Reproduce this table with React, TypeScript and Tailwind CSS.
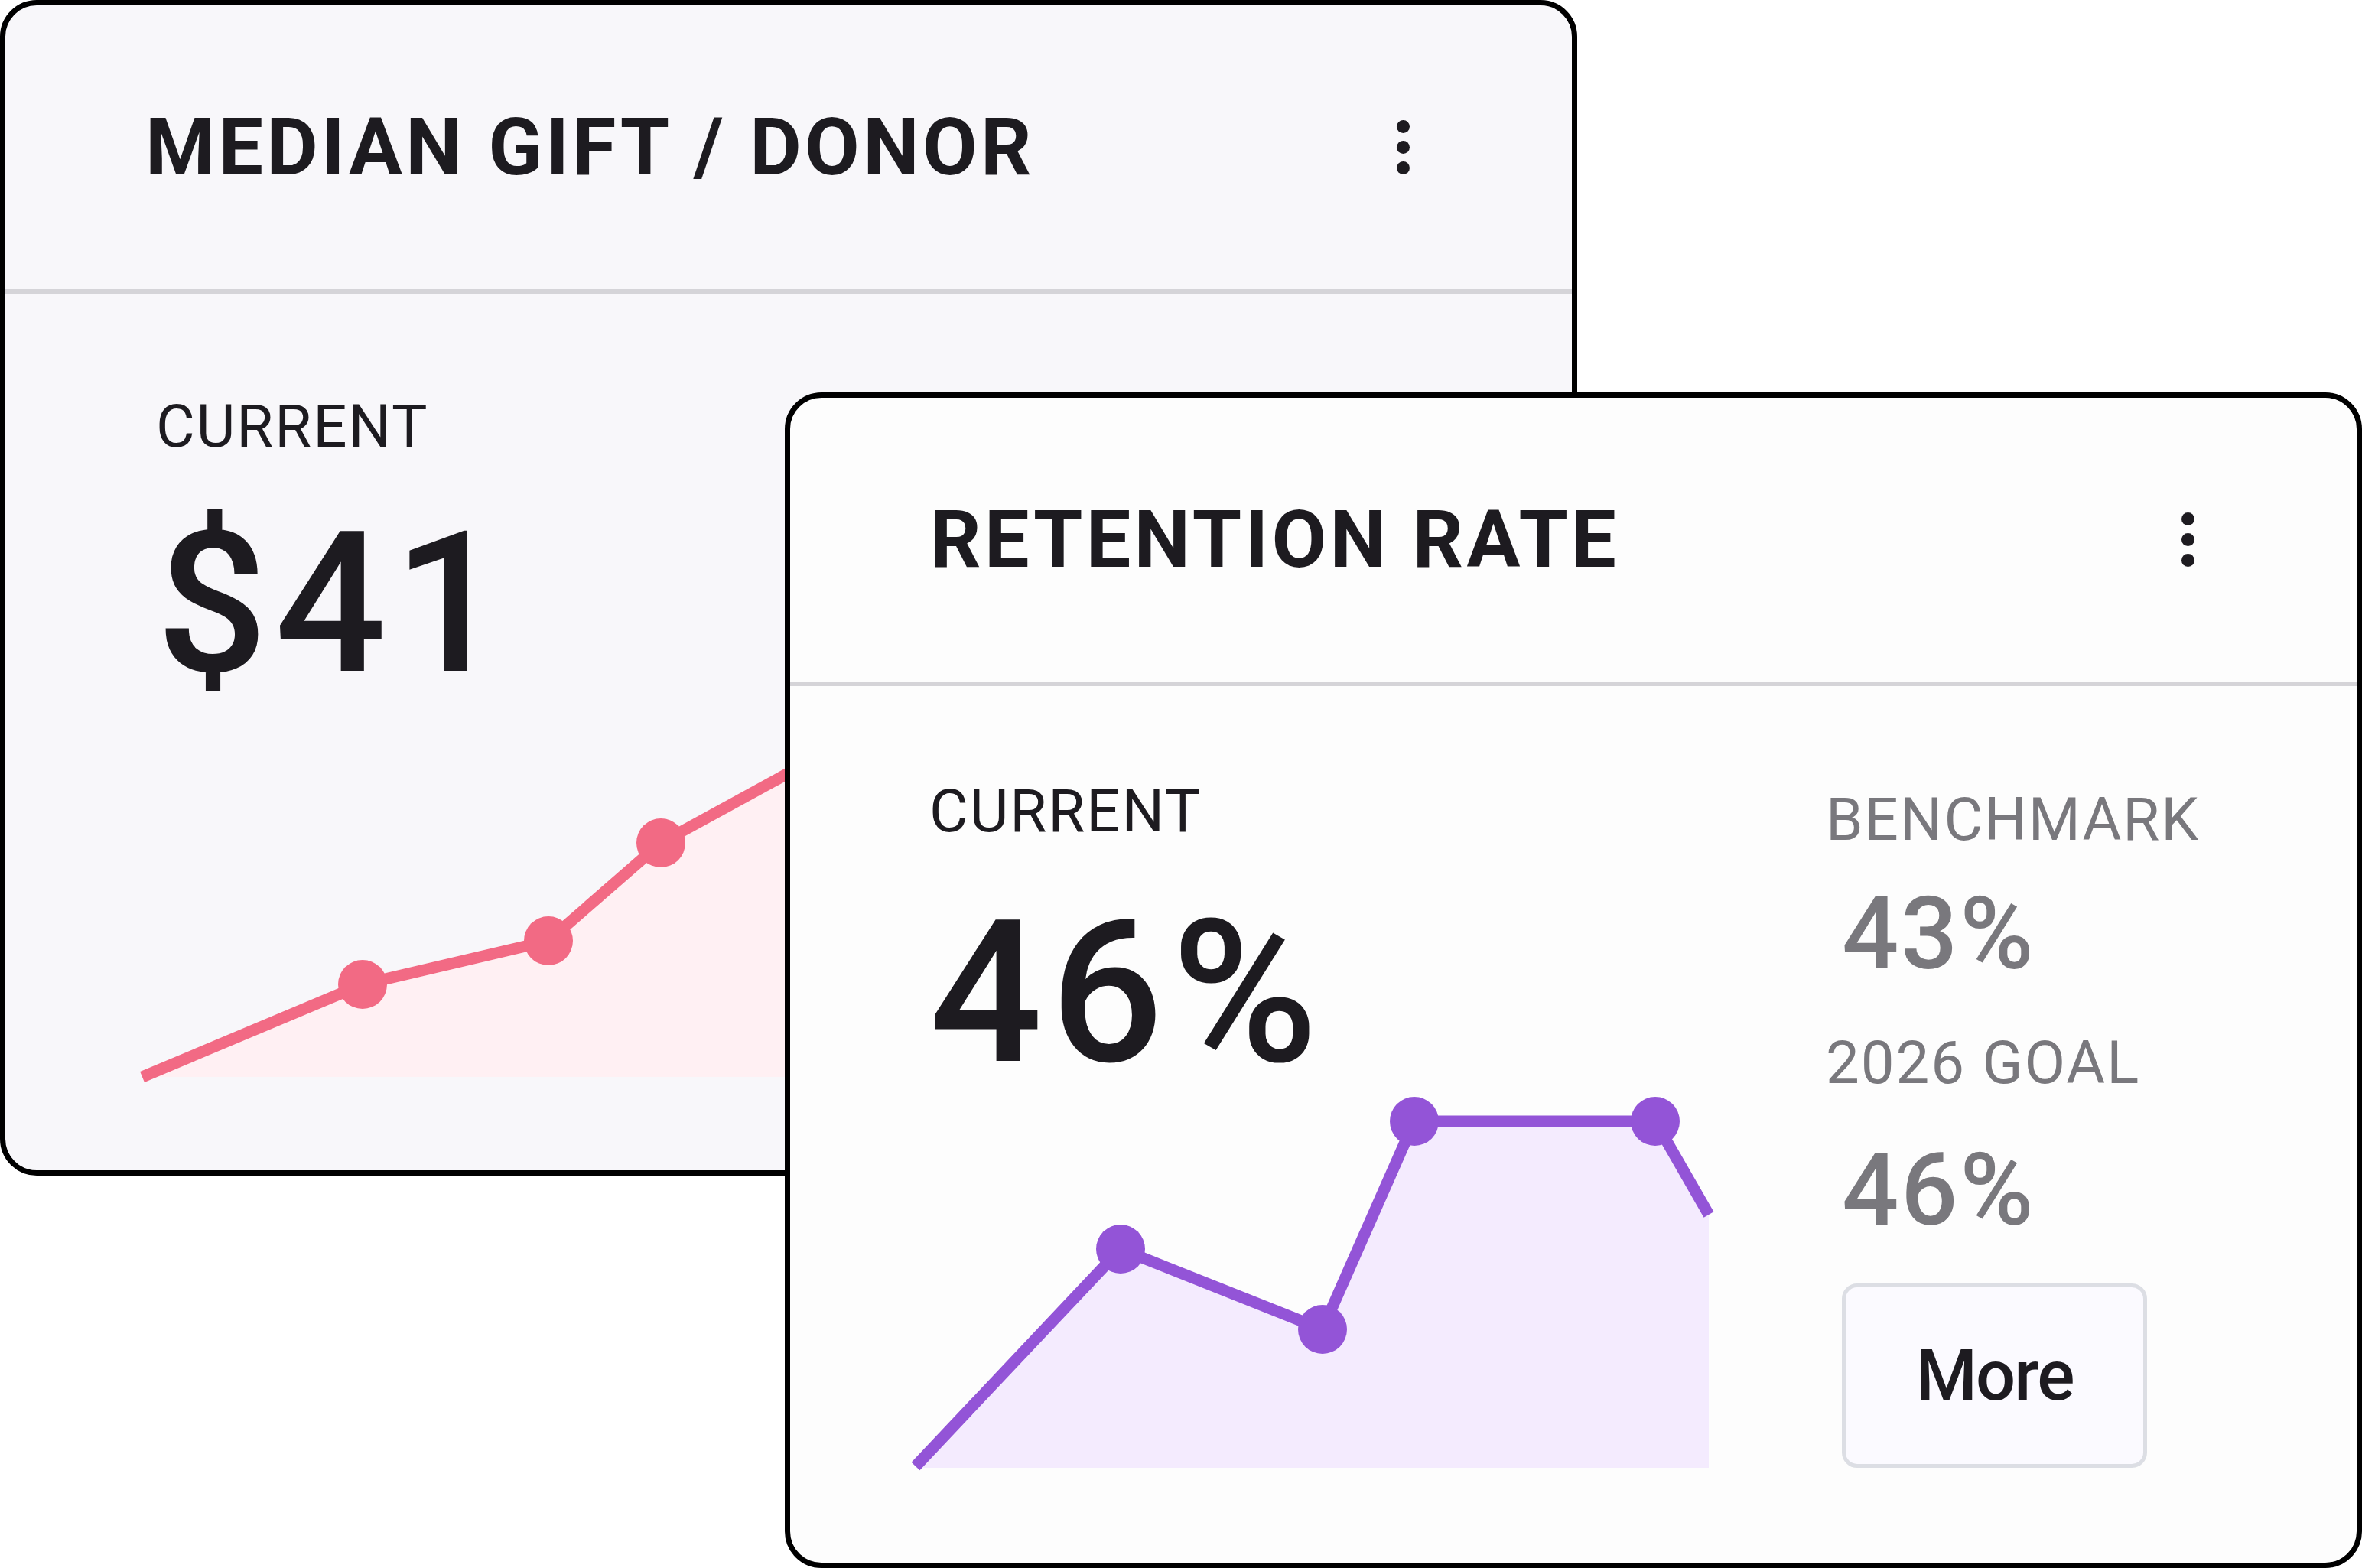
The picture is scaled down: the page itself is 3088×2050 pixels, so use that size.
import React from 'react';

// ── Helpers ──────────────────────────────────────────────────────────────────

type Pt = [number, number];

const FONT = { fontFamily: 'Roboto, "Noto Sans", sans-serif' };

function toPath(points: Pt[]): string {
  return points.map(([x, y], i) => `${i === 0 ? 'M' : 'L'}${x} ${y}`).join(' ');
}

// ── Kebab menu ───────────────────────────────────────────────────────────────

function Kebab() {
  return (
    <div className="flex flex-col gap-[10px]">
      <span className="block w-[17px] h-[17px] rounded-full bg-[#1d1b20]" />
      <span className="block w-[17px] h-[17px] rounded-full bg-[#1d1b20]" />
      <span className="block w-[17px] h-[17px] rounded-full bg-[#1d1b20]" />
    </div>
  );
}

// ── Area chart ───────────────────────────────────────────────────────────────

interface ChartProps {
  line: Pt[];
  dots: Pt[];
  bottom: number;
  stroke: string;
  fill: string;
}

function AreaChart({ line, dots, bottom, stroke, fill }: ChartProps) {
  const first = line[0];
  const last = line[line.length - 1];
  const area = `${toPath(line)} L${last[0]} ${bottom} L${first[0]} ${bottom} Z`;
  return (
    <svg
      width={1100}
      height={500}
      viewBox="0 0 1100 500"
      className="block overflow-visible ml-[143px] mt-[12px]"
    >
      <path d={area} fill={fill} />
      <path d={toPath(line)} fill="none" stroke={stroke} strokeWidth={15} strokeLinejoin="round" />
      {dots.map(([x, y], i) => (
        <circle key={i} cx={x} cy={y} r={32} fill={stroke} />
      ))}
    </svg>
  );
}

// ── Card shell ───────────────────────────────────────────────────────────────

function CardHeader({ title }: { title: string }) {
  return (
    <>
      <div className="h-[371px] shrink-0 flex items-center justify-between pl-[183px] pr-[212px]">
        <h2 className="text-[104px] leading-none font-bold tracking-[0.042em] text-[#1d1b20]">{title}</h2>
        <Kebab />
      </div>
      <div className="h-[6px] shrink-0 bg-[#d5d4d8]" />
    </>
  );
}

function Label({ children, gray }: { children: React.ReactNode; gray?: boolean }) {
  return (
    <p className={`text-[78px] leading-none tracking-wide ${gray ? 'text-[#79787d]' : 'text-[#1d1b20]'}`}>
      {children}
    </p>
  );
}

// ── Card 1 : Median gift ─────────────────────────────────────────────────────

function MedianGiftCard() {
  return (
    <div className="w-[2062px] h-[1537px] flex flex-col border-[7px] border-black rounded-[48px] bg-[#f8f7fa] overflow-hidden">
      <CardHeader title="MEDIAN GIFT / DONOR" />
      <div className="flex-1 flex flex-col pt-[135px]">
        <div className="pl-[197px]">
          <Label>CURRENT</Label>
          <p className="mt-[64px] text-[257px] leading-none font-medium tracking-[0.035em] text-[#1d1b20]">$41</p>
        </div>
        <AreaChart
          line={[[36, 478], [324, 357], [567, 300], [714, 172], [950, 43], [1080, 10]]}
          dots={[[324, 357], [567, 300], [714, 172], [950, 43]]}
          bottom={478}
          stroke="#f26a84"
          fill="#fff0f3"
        />
      </div>
    </div>
  );
}

// ── Card 2 : Retention rate ──────────────────────────────────────────────────

function RetentionCard() {
  return (
    <div className="w-[2062px] h-[1537px] flex flex-col border-[7px] border-black rounded-[48px] bg-[#fdfdfd] overflow-hidden">
      <CardHeader title="RETENTION RATE" />
      <div className="flex-1 flex">
        <div className="w-[1354px] flex flex-col pt-[125px]">
          <div className="pl-[182px]">
            <Label>CURRENT</Label>
            <p className="mt-[68px] text-[260px] leading-none font-medium tracking-[0.04em] text-[#1d1b20]">46%</p>
          </div>
          <AreaChart
            line={[[21, 477], [289, 193], [553, 298], [673, 26], [988, 26], [1058, 148]]}
            dots={[[289, 193], [553, 298], [673, 26], [988, 26]]}
            bottom={479}
            stroke="#9354d7"
            fill="#f4ebfe"
          />
        </div>

        <div className="flex-1 flex flex-col pt-[136px]">
          <Label gray>BENCHMARK</Label>
          <p className="mt-[45px] pl-[21px] text-[131px] leading-none font-medium tracking-[0.02em] text-[#79787d]">43%</p>
          <div className="mt-[64px]">
            <Label gray>2026 GOAL</Label>
          </div>
          <p className="mt-[62px] pl-[21px] text-[131px] leading-none font-medium tracking-[0.02em] text-[#79787d]">46%</p>
          <div className="mt-[56px] pl-[21px]">
            <button className="w-[399px] h-[241px] flex items-center justify-center border-[5px] border-[#dcdee4] rounded-[20px] bg-[#fbfaff] text-[92px] leading-none font-medium tracking-[-0.02em] text-[#1d1b20]">
              More
            </button>
          </div>
        </div>
      </div>
    </div>
  );
}

// ── Page ─────────────────────────────────────────────────────────────────────

export default function App() {
  return (
    <div className="relative w-[3088px] h-[2050px] bg-white overflow-hidden" style={FONT}>
      <MedianGiftCard />
      {/* second card overlaps the first */}
      <div className="absolute left-[1026px] top-[513px]">
        <RetentionCard />
      </div>
    </div>
  );
}
